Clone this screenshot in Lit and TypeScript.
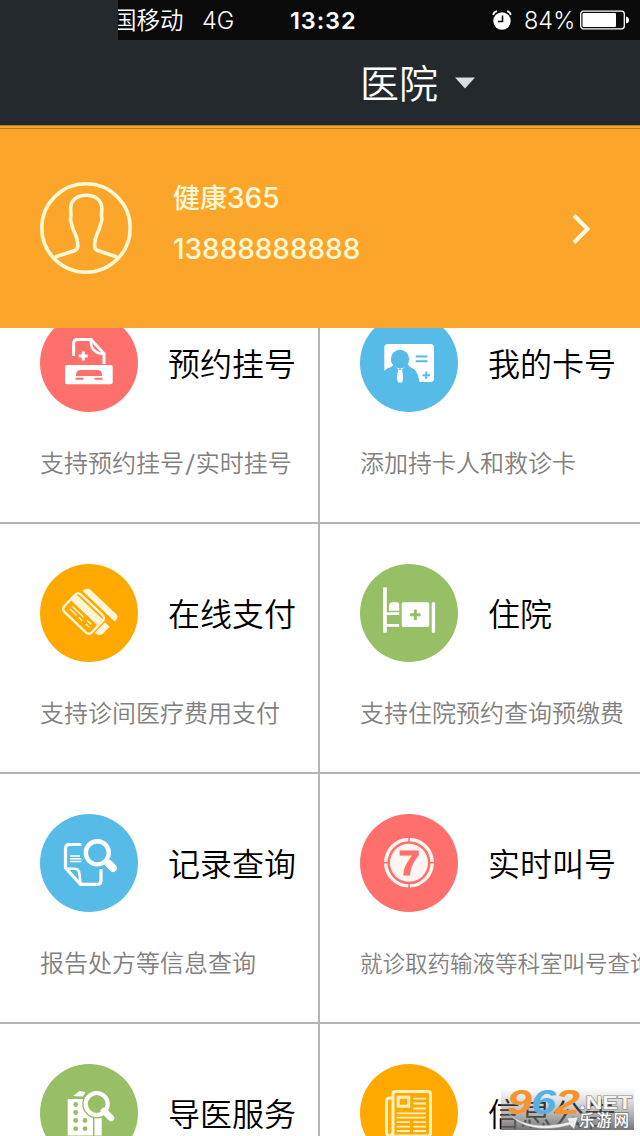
import { LitElement, html, css, svg, TemplateResult } from "lit";
import { customElement, property } from "lit/decorators.js";

interface Service {
  icon: string;
  color: string;
  title: string;
  note: string;
  tight?: boolean;
}

const RED = "#ff706d";
const BLUE = "#57bbe8";
const AMBER = "#ffa900";
const GREEN = "#97bf66";

const SERVICES: Service[] = [
  { icon: "register", color: RED, title: "预约挂号", note: "支持预约挂号/实时挂号" },
  { icon: "card", color: BLUE, title: "我的卡号", note: "添加持卡人和救诊卡" },
  { icon: "pay", color: AMBER, title: "在线支付", note: "支持诊间医疗费用支付" },
  { icon: "bed", color: GREEN, title: "住院", note: "支持住院预约查询预缴费" },
  { icon: "record", color: BLUE, title: "记录查询", note: "报告处方等信息查询" },
  { icon: "queue", color: RED, title: "实时叫号", note: "就诊取药输液等科室叫号查询", tight: true },
  { icon: "guide", color: GREEN, title: "导医服务", note: "" },
  { icon: "news", color: AMBER, title: "信息公告", note: "" },
];

const ICONS: Record<string, TemplateResult> = {
  register: svg`
    <path d="M33.6 42V29.5q0-4 4-4H51L64 39.5V50" fill="none" stroke="#fff" stroke-width="3"/>
    <path d="M51 25.5q-1 13.5 12.5 14.500" fill="none" stroke="#fff" stroke-width="2.600"/>
    <path d="M43.300 37.500v9M38.800 42h9" stroke="#fff" stroke-width="3"/>
    <rect x="25" y="51" width="47.700" height="19.300" rx="2" fill="#fff"/>
    <path d="M36 62v-1q0-5 5-5h16q5 0 5 5v1z" fill="${RED}"/>
    <path d="M35.500 64.800h8M54.500 64.800h8" stroke="${RED}" stroke-width="2"/>`,
  card: svg`
    <rect x="24.300" y="30" width="49.700" height="38" rx="3.500" fill="#fff"/>
    <path d="M24 69v-12q2-2.500 7-4l3-2.500 6 2 7-3 3 3.500c6 2 8.500 7 9.500 16z" fill="${BLUE}"/>
    <path d="M34.500 51.500l4 4.500 1.500-2 1.500 2 4.500-4.500-1-2H35z" fill="#fff"/>
    <circle cx="40" cy="45" r="9.200" fill="${BLUE}"/>
    <path d="M38 56h4.200l1 8-1 4.500h-4.200l-1.200-4.500z" fill="#fff"/>
    <path d="M55.700 42.500h11.800M55.700 47.200h11.800M66.300 57.500v7.600M62.500 61.300h7.600" stroke="${BLUE}" stroke-width="2"/>`,
  pay: svg`
    <g transform="translate(38.300 26) rotate(43.500)" fill="#fff6d8">
      <rect x="1" y="1.500" width="38" height="24" rx="4" fill="none" stroke="#fff6d8" stroke-width="2.400"/>
      <rect x="2" y="4.500" width="36.500" height="8"/>
      <path d="M7 16h15M7 19.500h9M19 19.500h5M27 16h6M29 19.500h5" stroke="#fff6d8" stroke-width="1.400"/>
      <path d="M9-8.500q-4.500 0-5.500 6.300H48V-4.500q0-4-4-4z"/>
      <path d="M41.500 5H48v9q0 4.500-5 5.500h-1.500z"/>
    </g>`,
  bed: svg`
    <g fill="#fff">
      <rect x="23" y="23.200" width="3.800" height="45.600" rx="1"/>
      <rect x="71.700" y="38.300" width="3.400" height="30.500" rx="1"/>
      <path d="M29 46.700V42q0-3.700 3.500-3.700H37q2.200 0 2.200 2.200v6.200z"/>
      <path d="M26 48.200h13.200v2.800H26zM26 60h13.200v2.800H26z"/>
      <rect x="41.700" y="38.300" width="27.600" height="24.700" rx="1.800"/>
    </g>
    <path d="M55.300 45.500v10.400M50.100 50.700h10.400" stroke="${GREEN}" stroke-width="3"/>`,
  record: svg`
    <g fill="none" stroke="#fff" stroke-width="3.200">
      <path d="M41.500 30.500H29.500q-4 0-4 4V54L40.500 70.300H57.500q3.500 0 3.500-3.500V55"/>
      <path d="M26 54.800h8.500q4.500 0 5 5l1 9.500" stroke-width="2.600"/>
      <path d="M30 42h10M30 44.700h11.500M30 47.500h11.500" stroke-width="1.400"/>
      <circle cx="57.300" cy="38.800" r="11.500" stroke-width="4.400"/>
      <path d="M65.500 46.500l3 3" stroke-width="4.500"/>
      <path d="M69 50l4 4" stroke-width="8" stroke-linecap="round"/>
    </g>`,
  queue: svg`
    <circle cx="49" cy="48.700" r="23.200" fill="none" stroke="#fff6f2" stroke-width="3.400"/>
    <circle cx="49" cy="48.700" r="19" fill="#fff6f2"/>
    <path d="M49 23v5M49 69.500v5M23.500 48.700h5M69.500 48.700h5" stroke="${RED}" stroke-width="1.600"/>
    <text x="49.200" y="61.300" text-anchor="middle" font-family="Liberation Sans, sans-serif" font-weight="700"
      font-size="34.500" fill="${RED}" stroke="${RED}" stroke-width="1.200" textLength="21" lengthAdjust="spacingAndGlyphs">7</text>`,
  guide: svg`
    <path d="M27.700 35H53v36.500H27.700zM33 32l6.500-5 6 1-2.500 4.500zM54.500 54h7.200v17.500h-7.200z" fill="#fff"/>
    <g fill="${GREEN}">
      <circle cx="35.700" cy="40.500" r="2.400"/><circle cx="35.700" cy="48.500" r="2.400"/>
      <circle cx="35.700" cy="56.500" r="2.400"/><circle cx="35.700" cy="64.700" r="2.400"/>
      <circle cx="45" cy="56.500" r="2.400"/><circle cx="45" cy="64.700" r="2.400"/>
    </g>
    <circle cx="56.700" cy="40" r="14.500" fill="${GREEN}"/>
    <circle cx="56.700" cy="40" r="11" fill="none" stroke="#fff" stroke-width="4.200"/>
    <path d="M64 47l7 7" stroke="#fff" stroke-width="6.500" stroke-linecap="round"/>`,
  news: svg`
    <g fill="none" stroke="#fff1bd" stroke-width="3">
      <path d="M32 34h-2q-3.500 0-3.500 3.500V68q0 4 4 4H67q3.500 0 3.500-3.500V30q0-2.500-2.500-2.500H35.500q-2.500 0-2.500 2.500V67q0 4-3 4.500"/>
      <rect x="38.200" y="33.200" width="10.500" height="9"/>
      <path d="M53.300 34.700H66M53.300 39.500H66M53.300 44.500H66M36.700 49.300H66M36.700 53.700H66M36.700 58.200H50M53.300 58.200H66M36.700 62.600H50M53.300 62.600H66M36.700 67H50M53.300 67H66" stroke-width="1.800"/>
    </g>`,
};

@customElement("service-tile")
export class ServiceTile extends LitElement {
  @property({ attribute: false }) service!: Service;

  static styles = css`
    :host { display: block; box-sizing: border-box; height: 248px; padding: 40px 0 0 40px; overflow: hidden; background: #fff; }
    .head { display: flex; align-items: center; gap: 30px; height: 98px; }
    .icon { display: block; width: 98px; height: 98px; flex: none; }
    .title { padding-top: 3px; font-size: 32px; line-height: 48px; font-weight: 350; color: #000; white-space: nowrap; }
    .note { margin-top: 33px; font-size: 24px; line-height: 38px; font-weight: 350; color: #808080; white-space: nowrap; }
    .tight { font-size: 22.5px; }
    .slash { display: inline-block; transform: scaleX(1.3); margin: 0 1.700px; }
  `;

  render() {
    const s = this.service;
    const parts = s.note.split("/");
    return html`
      <div class="head">
        <svg class="icon" viewBox="0 0 98 98">
          <circle cx="49" cy="49" r="49" fill=${s.color}></circle>
          ${ICONS[s.icon]}
        </svg>
        <div class="title">${s.title}</div>
      </div>
      <div class="note ${s.tight ? "tight" : ""}">${parts.map(
        (p, i) => html`${i ? html`<span class="slash">/</span>` : ""}${p}`
      )}</div>
    `;
  }
}

@customElement("app-root")
export class AppRoot extends LitElement {
  static styles = css`
    :host { display: block; position: relative; width: 640px; height: 1136px; overflow: hidden; background: #fff;
      font-family: Inter, "Noto Sans CJK SC", sans-serif; }
    svg { display: block; flex: none; }
    .top { box-sizing: border-box; height: 129px; background: #24292d; border-bottom: 1px solid #bd7a16; }
    .status { display: flex; align-items: center; margin-left: 118px; height: 40px; background: #0a0a0a; color: #fff;
      font-size: 24px; line-height: 38px; white-space: nowrap; overflow: hidden; }
    .status span { padding-top: 2px; }
    .carrier { width: 85px; font-size: 23.500px; margin-left: -5px; font-weight: 350; }
    .net { width: 92px; margin-left: 4px; font-size: 23.500px; font-weight: 350; }
    .time { width: 199px; font-weight: 600; font-size: 23.500px; letter-spacing: .9px; margin-left: -4px; }
    .alarm { margin-left: 3px; }
    .pct { margin-left: 12px; width: 56px; font-size: 23.500px; font-weight: 350; }
    .nav { display: flex; align-items: center; height: 85px; padding-left: 360px; color: #fff; font-size: 39px;
      font-weight: 350; line-height: 82px; }
    .nav span { padding-top: 3px; }
    .caret { margin-left: 17px; }
    .rim { height: 3px; background: linear-gradient(#bb7b1d 0 1px, #f3a632 1px 3px); }
    .user { display: flex; align-items: center; box-sizing: border-box; height: 199px; padding: 0 48px 1px 40px;
      background: #fba62b; color: #fff8d5; }
    .info { flex: 1; margin-left: 41px; font-size: 27px; line-height: 50px; margin-top: -9px; }
    .name { font-weight: 500; }
    .digits { font-size: 28px; font-weight: 450; }
    .phone { font-size: 28px; font-weight: 450; letter-spacing: -.05px; }
    .grid { display: grid; grid-template-columns: 318px 320px; gap: 2px; background: #b5b5b5; grid-auto-rows: 248px; }
    .viewport { display: flex; flex-direction: column; justify-content: flex-start; height: 808px; overflow: hidden; }
    .grid { margin-top: -54px; flex: none; }
    .mark { position: absolute; left: 501px; top: 1086px; }
  `;

  render() {
    return html`
      <div class="top">
        <div class="status">
          <span class="carrier">国移动</span>
          <span class="net">4G</span>
          <span class="time">13:32</span>
          <svg class="alarm" width="20" height="20" viewBox="0 0 20 20">
            <circle cx="10" cy="11" r="8.700" fill="#fff"/>
            <path d="M10.500 5.500v6H6" fill="none" stroke="#0a0a0a" stroke-width="1.600"/>
            <path d="M1.200 5q.5-3 3.800-3.800M15 1.200Q18.300 2 18.800 5" fill="none" stroke="#fff" stroke-width="1.800"/>
          </svg>
          <span class="pct">84%</span>
          <svg width="50" height="20" viewBox="0 0 50 20">
            <rect x=".7" y="1.200" width="43.600" height="17.600" rx="2.800" fill="none" stroke="#fff" stroke-width="1.300"/>
            <rect x="2.500" y="3" width="33.500" height="14" rx="1" fill="#fff"/>
            <path d="M46 6.500q3 .5 3 3.500t-3 3.500z" fill="#fff"/>
          </svg>
        </div>
        <div class="nav">
          <span>医院</span>
          <svg class="caret" width="20" height="12" viewBox="0 0 20 12"><path d="M0 .5h20L10 11.500z" fill="#dcdedd"/></svg>
        </div>
        <div class="rim"></div>
      </div>
      <div class="user">
        <svg width="92" height="92" viewBox="0 0 92 92" fill="none" stroke="#fff8d5">
          <circle cx="46" cy="46" r="44.200" stroke-width="3.600"/>
          <path stroke-width="3.600" d="M15 75L35 68.500Q38 67 37.700 63.500C38 55 34 51 32.200 44.500Q31.700 42 30.400 37.500 31.300 35 30.700 28C30 19 36 13.200 46 13.200S62.500 19 61.800 28Q61.200 35 62 37.500 60.500 42 60 44.500C58 52 54 55 54.700 63.500Q54.500 67 57.500 68.500L77 75"/>
        </svg>
        <div class="info">
          <div class="name">健康<span class="digits">365</span></div>
          <div class="phone">13888888888</div>
        </div>
        <svg width="20" height="32" viewBox="0 0 20 32"><path d="M2 3.500L15.500 17 2 30.500" fill="none" stroke="#fffbe6" stroke-width="4"/></svg>
      </div>
      <div class="viewport">
        <div class="grid">${SERVICES.map((s) => html`<service-tile .service=${s}></service-tile>`)}</div>
      </div>
      <svg class="mark" width="139" height="50" viewBox="0 0 139 50">
        <defs>
          <linearGradient id="shade" x1="0" y1="0" x2="0" y2="1">
            <stop offset="0" stop-color="#999" stop-opacity="0"/>
            <stop offset="1" stop-color="#666" stop-opacity=".9"/>
          </linearGradient>
        </defs>
        <rect x="0" y="1" width="133" height="43" fill="url(#shade)"/>
        <path d="M7 27Q28 46 68 36l-2-4 11-1-4 12-4-4Q27 50 7 27z" fill="#eee" stroke="#999" stroke-width=".5"/>
        <g font-family="Liberation Sans, sans-serif" font-weight="700" font-style="italic" font-size="35">
          <text x="6" y="28" fill="#f59331" textLength="25" lengthAdjust="spacingAndGlyphs">9</text>
          <text x="30" y="28" fill="#58b1e2" textLength="25" lengthAdjust="spacingAndGlyphs">6</text>
          <text x="54" y="28" fill="#f59331" textLength="25" lengthAdjust="spacingAndGlyphs">2</text>
        </g>
        <text x="78" y="22.500" font-family="Liberation Sans, sans-serif" font-weight="700" font-size="18.500" fill="#f4f4f4"
          stroke="#888" stroke-width="1.200" paint-order="stroke" textLength="53" lengthAdjust="spacingAndGlyphs">.NET</text>
        <text x="78" y="40" font-family="Noto Sans CJK SC, sans-serif" font-weight="500" font-size="15.500" fill="#fff"
          stroke="#777" stroke-width="1.400" paint-order="stroke" textLength="50">乐游网</text>
      </svg>
    `;
  }
}
